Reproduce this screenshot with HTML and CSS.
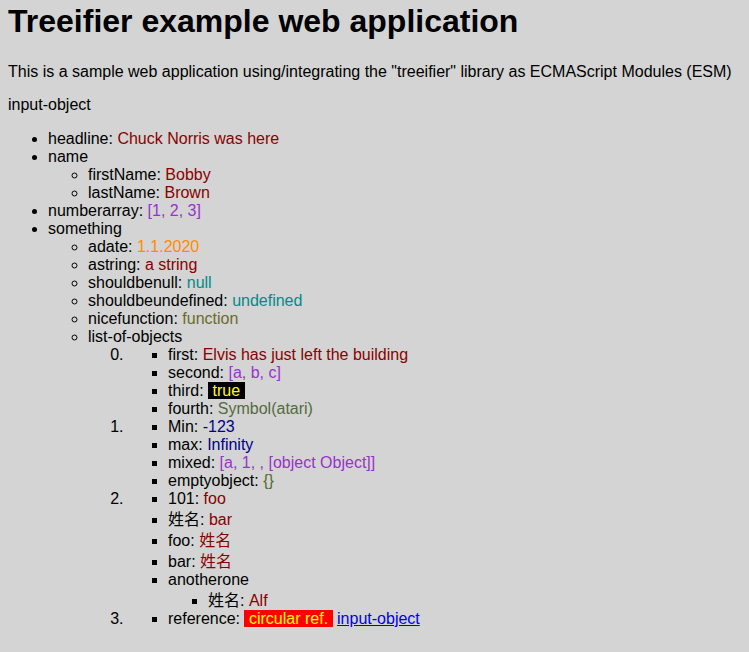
FILE: index.html
```html
<!DOCTYPE html>
<html lang="en">
<head>
<meta charset="utf-8">
<title>Treeifier example web application</title>
<link rel="stylesheet" href="styles.css">
</head>
<body>
<h1 class="title">Treeifier example web application</h1>
<p class="intro">This is a sample web application using/integrating the "treeifier" library as ECMAScript Modules (ESM)</p>
<div class="root-label">input-object</div>
<ul class="tree">
  <li><span class="key">headline: </span><span class="v-str">Chuck Norris was here</span></li>
  <li><span class="key">name</span>
    <ul>
      <li><span class="key">firstName: </span><span class="v-str">Bobby</span></li>
      <li><span class="key">lastName: </span><span class="v-str">Brown</span></li>
    </ul>
  </li>
  <li><span class="key">numberarray: </span><span class="v-arr">[1, 2, 3]</span></li>
  <li><span class="key">something</span>
    <ul>
      <li><span class="key">adate: </span><span class="v-date">1.1.2020</span></li>
      <li><span class="key">astring: </span><span class="v-str">a string</span></li>
      <li><span class="key">shouldbenull: </span><span class="v-null">null</span></li>
      <li><span class="key">shouldbeundefined: </span><span class="v-null">undefined</span></li>
      <li><span class="key">nicefunction: </span><span class="v-fn">function</span></li>
      <li><span class="key">list-of-objects</span>
        <ol start="0">
          <li>
            <ul>
              <li><span class="key">first: </span><span class="v-str">Elvis has just left the building</span></li>
              <li><span class="key">second: </span><span class="v-arr">[a, b, c]</span></li>
              <li><span class="key">third: </span><span class="v-bool">true</span></li>
              <li><span class="key">fourth: </span><span class="v-sym">Symbol(atari)</span></li>
            </ul>
          </li>
          <li>
            <ul>
              <li><span class="key">Min: </span><span class="v-num">-123</span></li>
              <li><span class="key">max: </span><span class="v-num">Infinity</span></li>
              <li><span class="key">mixed: </span><span class="v-arr">[a, 1, , [object Object]]</span></li>
              <li><span class="key">emptyobject: </span><span class="v-obj">{}</span></li>
            </ul>
          </li>
          <li>
            <ul>
              <li><span class="key">101: </span><span class="v-str">foo</span></li>
              <li><span class="key"><span class="cjk">姓名</span>: </span><span class="v-str">bar</span></li>
              <li><span class="key">foo: </span><span class="v-str cjk">姓名</span></li>
              <li><span class="key">bar: </span><span class="v-str cjk">姓名</span></li>
              <li><span class="key">anotherone</span>
                <ul>
                  <li><span class="key"><span class="cjk">姓名</span>: </span><span class="v-str">Alf</span></li>
                </ul>
              </li>
            </ul>
          </li>
          <li>
            <ul>
              <li><span class="key">reference: </span><span class="v-circ">circular ref.</span> <a class="ref-link" href="#">input-object</a></li>
            </ul>
          </li>
        </ol>
      </li>
    </ul>
  </li>
</ul>
</body>
</html>
```

FILE: styles.css
```css
html {
  background: #d3d4d3;
}

body {
  margin: 0;
  padding: 3px 8px 8px;
  font-family: "Liberation Sans", Arial, "Noto Sans CJK SC", sans-serif;
  font-size: 16px;
  line-height: 18px;
  color: #000;
  background: #d3d4d3;
}

.title {
  margin: 0 0 23px;
  font-size: 32px;
  line-height: 37px;
  font-weight: bold;
}

.intro {
  margin: 0 0 15px;
}

.root-label {
  margin: 0;
}

.tree {
  margin: 16px 0;
  padding-left: 40px;
}

.tree ul,
.tree ol {
  margin: 0;
  padding-left: 40px;
}

.key {
  color: #000;
}

.cjk {
  font-family: "Noto Sans CJK SC", sans-serif;
  line-height: 21px;
}

.v-str {
  color: #8b0000;
}

.v-arr {
  color: #9932cc;
}

.v-date {
  color: #ff8c00;
}

.v-null {
  color: #008b8b;
}

.v-fn {
  color: #6b6b2a;
}

.v-sym {
  color: #556b3f;
}

.v-obj {
  color: #556b2f;
}

.v-num {
  color: #00008b;
}

.v-bool {
  background: #000;
  color: #ffff00;
  padding: 0 4.5px;
}

.v-circ {
  background: #ff0000;
  color: #ffff00;
  padding: 0 4.5px;
}

.ref-link {
  color: #0000ee;
  text-decoration: underline;
}
```
